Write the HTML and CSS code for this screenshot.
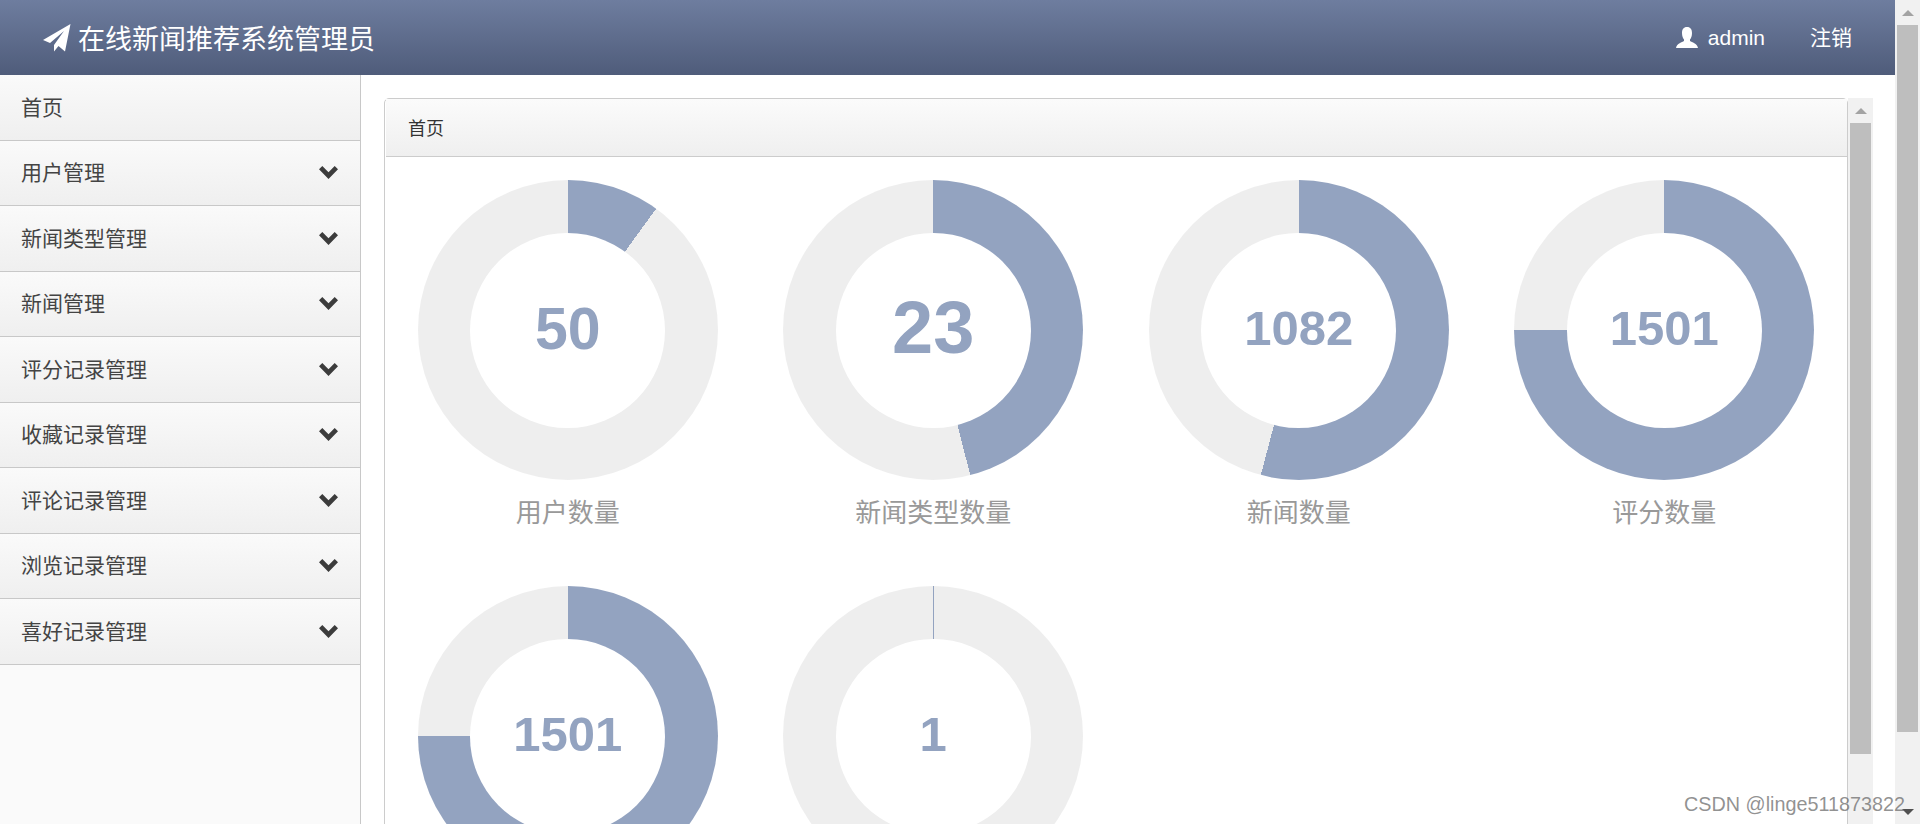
FILE: index.html
```html
<!DOCTYPE html>
<html lang="zh-CN">
<head>
    <meta charset="UTF-8">
    <title>在线新闻推荐系统管理员</title>
    <link rel="stylesheet" href="styles.css">
</head>
<body>

    <div class="page">
        <header class="topbar">
            <div class="brand">
                <svg class="icon-send" viewBox="0 0 28 28"><path d="M27.5 0L0 16l7 3L21 7 11 21v6.5l4.500-5.500 6.500 5.500z"/></svg>
                <span>在线新闻推荐系统管理员</span>
            </div>
            <div class="user">
                <svg class="icon-user" viewBox="0 0 22 21"><path d="M11 0C7.500 0 6 2.500 6 6c0 3 1 5.500 2 6.500V14c-2 1.500-7 2-8 7h22c-1-5-6-5.500-8-7v-1.500c1-1 2-3.500 2-6.500 0-3.500-1.500-6-5-6z"/></svg>
                <span class="user-name">admin</span>
                <a class="logout">注销</a>
            </div>
        </header>

        <div class="content">
            <nav class="sidebar">
                <div class="menu-item"><span>首页</span></div>
                <div class="menu-item"><span>用户管理</span><svg class="chevron" viewBox="0 0 19 13"><path d="M3.300 0l6.200 6.200L15.700 0 19 3.300 9.500 13 0 3.300z"/></svg></div>
                <div class="menu-item"><span>新闻类型管理</span><svg class="chevron" viewBox="0 0 19 13"><path d="M3.300 0l6.200 6.200L15.700 0 19 3.300 9.500 13 0 3.300z"/></svg></div>
                <div class="menu-item"><span>新闻管理</span><svg class="chevron" viewBox="0 0 19 13"><path d="M3.300 0l6.200 6.200L15.700 0 19 3.300 9.500 13 0 3.300z"/></svg></div>
                <div class="menu-item"><span>评分记录管理</span><svg class="chevron" viewBox="0 0 19 13"><path d="M3.300 0l6.200 6.200L15.700 0 19 3.300 9.500 13 0 3.300z"/></svg></div>
                <div class="menu-item"><span>收藏记录管理</span><svg class="chevron" viewBox="0 0 19 13"><path d="M3.300 0l6.200 6.200L15.700 0 19 3.300 9.500 13 0 3.300z"/></svg></div>
                <div class="menu-item"><span>评论记录管理</span><svg class="chevron" viewBox="0 0 19 13"><path d="M3.300 0l6.200 6.200L15.700 0 19 3.300 9.500 13 0 3.300z"/></svg></div>
                <div class="menu-item"><span>浏览记录管理</span><svg class="chevron" viewBox="0 0 19 13"><path d="M3.300 0l6.200 6.200L15.700 0 19 3.300 9.500 13 0 3.300z"/></svg></div>
                <div class="menu-item"><span>喜好记录管理</span><svg class="chevron" viewBox="0 0 19 13"><path d="M3.300 0l6.200 6.200L15.700 0 19 3.300 9.500 13 0 3.300z"/></svg></div>
            </nav>

            <main class="main">
                <section class="panel">
                    <div class="panel-heading">首页</div>
                    <div class="panel-body">
                        <div class="stat">
                            <div class="donut" style="--pct:10%"><div class="donut-hole num-md">50</div></div>
                            <div class="stat-label">用户数量</div>
                        </div>
                        <div class="stat">
                            <div class="donut" style="--pct:46%"><div class="donut-hole num-lg">23</div></div>
                            <div class="stat-label">新闻类型数量</div>
                        </div>
                        <div class="stat">
                            <div class="donut" style="--pct:54.1%"><div class="donut-hole">1082</div></div>
                            <div class="stat-label">新闻数量</div>
                        </div>
                        <div class="stat">
                            <div class="donut" style="--pct:75.05%"><div class="donut-hole">1501</div></div>
                            <div class="stat-label">评分数量</div>
                        </div>
                        <div class="stat">
                            <div class="donut" style="--pct:75.05%"><div class="donut-hole">1501</div></div>
                        </div>
                        <div class="stat">
                            <div class="donut" style="--pct:0.1%"><div class="donut-hole">1</div></div>
                        </div>
                    </div>
                </section>
                <div class="scrollbar">
                    <div class="arrow-box"><i class="arrow-up"></i></div>
                    <div class="thumb thumb-inner"></div>
                </div>
            </main>
        </div>
    </div>

    <div class="scrollbar">
        <div class="arrow-box"><i class="arrow-up"></i></div>
        <div class="thumb thumb-page"></div>
        <div class="arrow-box arrow-box-end"><i class="arrow-down"></i></div>
    </div>

    <div class="watermark">CSDN @linge511873822</div>

</body>
</html>
```

FILE: styles.css
```css
* {
    box-sizing: border-box;
}

body {
    font-family: "Liberation Sans", "Noto Sans CJK SC", sans-serif;
    background-color: #fff;
    margin: 0;
    padding: 0;
    display: flex;
    height: 100vh;
    overflow: hidden;
}

.page {
    flex: 1;
    min-width: 0;
    display: flex;
    flex-direction: column;
}

.topbar {
    height: 75px;
    flex-shrink: 0;
    padding: 0 43px;
    display: flex;
    justify-content: space-between;
    align-items: center;
    color: #fff;
    background: linear-gradient(#6e7d9f, #4f5c7a);
}

.brand {
    display: flex;
    align-items: center;
    gap: 7px;
    font-size: 27px;
}

.icon-send {
    width: 28px;
    height: 28px;
    fill: #fff;
}

.user {
    display: flex;
    align-items: center;
    font-size: 21px;
}

.icon-user {
    width: 22px;
    height: 21px;
    margin-right: 10px;
    fill: #fff;
}

.logout {
    margin-left: 45px;
    padding-bottom: 3px;
}

.content {
    flex: 1;
    min-height: 0;
    display: flex;
}

.sidebar {
    width: 361px;
    flex-shrink: 0;
    background-color: #fafafa;
    border-right: 1px solid #c8c8c8;
}

.menu-item {
    height: 65.5px;
    padding: 0 22px 0 21px;
    display: flex;
    justify-content: space-between;
    align-items: center;
    font-size: 21px;
    color: #444;
    background: linear-gradient(#fafafa, #efefef);
    border-bottom: 1px solid #c8c8c8;
}

.menu-item span {
    padding-bottom: 3px;
}

.chevron {
    width: 19px;
    height: 13px;
    fill: #3c3c3c;
}

.main {
    flex: 1;
    min-width: 0;
    padding: 23px 22px 0 23px;
    display: flex;
    overflow: hidden;
}

.panel {
    flex: 1;
    min-width: 0;
    height: 1000px;
    border: 1px solid #ccc;
    border-radius: 5px;
}

.panel-heading {
    height: 58px;
    margin-left: 1px;
    padding: 0 0 2px 22px;
    display: flex;
    align-items: center;
    font-size: 18px;
    color: #333;
    background: linear-gradient(#fbfbfb, #efefef);
    border-bottom: 1px solid #ccc;
}

.panel-body {
    padding-top: 23px;
    display: grid;
    grid-template-columns: repeat(4, 1fr);
    grid-auto-rows: 406px;
}

.stat {
    display: flex;
    flex-direction: column;
    align-items: center;
}

.donut {
    width: 300px;
    height: 300px;
    border-radius: 50%;
    display: flex;
    justify-content: center;
    align-items: center;
    background: conic-gradient(#93a3c0 var(--pct), #eee 0);
}

.donut-hole {
    width: 195px;
    height: 195px;
    border-radius: 50%;
    padding-bottom: 5px;
    display: flex;
    justify-content: center;
    align-items: center;
    background-color: #fff;
    font-size: 49px;
    font-weight: bold;
    color: #93a3c0;
}

.num-md {
    font-size: 59px;
    padding-bottom: 3px;
}

.num-lg {
    font-size: 74px;
    padding-bottom: 6px;
}

.stat-label {
    margin-top: 12px;
    font-size: 26px;
    color: #999;
}

.scrollbar {
    width: 25px;
    flex-shrink: 0;
    display: flex;
    flex-direction: column;
    align-items: center;
    background-color: #f1f1f1;
}

.arrow-box {
    width: 100%;
    height: 25px;
    flex-shrink: 0;
    display: flex;
    justify-content: center;
    align-items: center;
}

.arrow-box-end {
    margin-top: auto;
}

.arrow-up,
.arrow-down {
    width: 0;
    height: 0;
    border-left: 6px solid transparent;
    border-right: 6px solid transparent;
}

.arrow-up {
    border-bottom: 6px solid #a3a3a3;
}

.arrow-down {
    border-top: 6px solid #505050;
}

.thumb {
    width: 21px;
    background-color: #bebebe;
}

.thumb-inner {
    height: 631px;
}

.thumb-page {
    height: 707px;
}

.watermark {
    position: absolute;
    right: 15px;
    bottom: 8px;
    font-size: 19.8px;
    color: rgba(110, 110, 110, 0.75);
}
```
